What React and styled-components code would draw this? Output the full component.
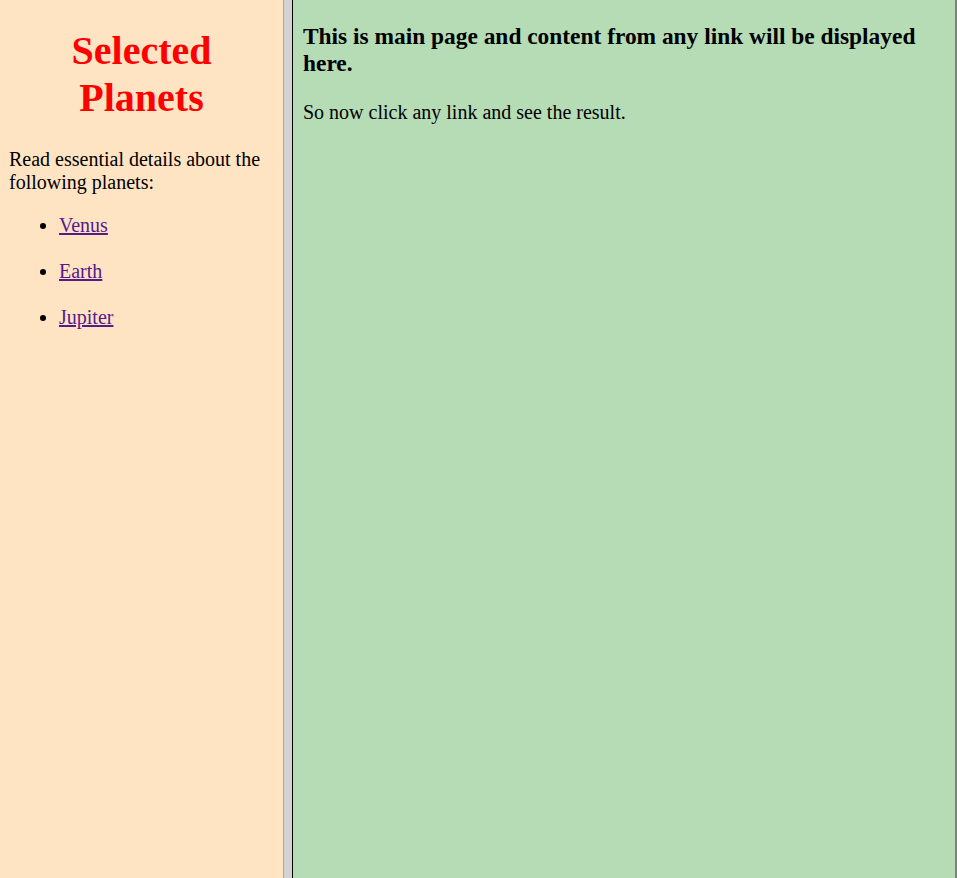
import styled, { createGlobalStyle } from "styled-components";

const GlobalStyle = createGlobalStyle`
  html, body {
    margin: 0;
    padding: 0;
    height: 100%;
  }
  body {
    font-family: "Liberation Serif", "Times New Roman", serif;
    font-size: 20px;
    color: #000;
  }
`;

const Frameset = styled.div`
  display: flex;
  flex-direction: row;
  height: 100vh;
  overflow: hidden;
`;

const SideFrame = styled.nav`
  width: 283px;
  flex-shrink: 0;
  padding: 0 9px;
  box-sizing: border-box;
  background-color: #ffe4c4;
`;

const FrameBorder = styled.div`
  width: 8px;
  flex-shrink: 0;
  background-color: #d3d3d3;
  border-left: 1px solid #a9a9a9;
`;

const MainFrame = styled.main`
  flex: 1;
  padding: 0 10px;
  background-color: #b5dcb5;
  border-left: 1px solid #000;
  border-right: 2px solid #808080;
`;

const Title = styled.h1`
  margin: 26.8px 0;
  font-size: 40px;
  font-weight: bold;
  text-align: center;
  color: #ff0000;
`;

const Text = styled.p`
  margin: 20px 0;
  line-height: 23px;
`;

const PlanetList = styled.ul`
  margin: 20px 0;
  padding-left: 50px;
  line-height: 23px;
`;

const PlanetItem = styled.li`
  & + & {
    margin-top: 23px;
  }
`;

const PlanetLink = styled.a`
  color: #551a8b;
  text-decoration: underline;
`;

const Heading = styled.h3`
  margin: 23.4px 0;
  font-size: 23.4px;
  font-weight: bold;
`;

const planets = ["Venus", "Earth", "Jupiter"];

const App = () => {
  return (
    <>
      <GlobalStyle />
      <Frameset>
        <SideFrame>
          <Title>Selected Planets</Title>
          <Text>Read essential details about the following planets:</Text>
          <PlanetList>
            {planets.map((planet) => (
              <PlanetItem key={planet}>
                <PlanetLink href={`#${planet.toLowerCase()}`}>{planet}</PlanetLink>
              </PlanetItem>
            ))}
          </PlanetList>
        </SideFrame>
        <FrameBorder />
        <MainFrame>
          <Heading>This is main page and content from any link will be displayed here.</Heading>
          <Text>So now click any link and see the result.</Text>
        </MainFrame>
      </Frameset>
    </>
  );
};

export default App;
